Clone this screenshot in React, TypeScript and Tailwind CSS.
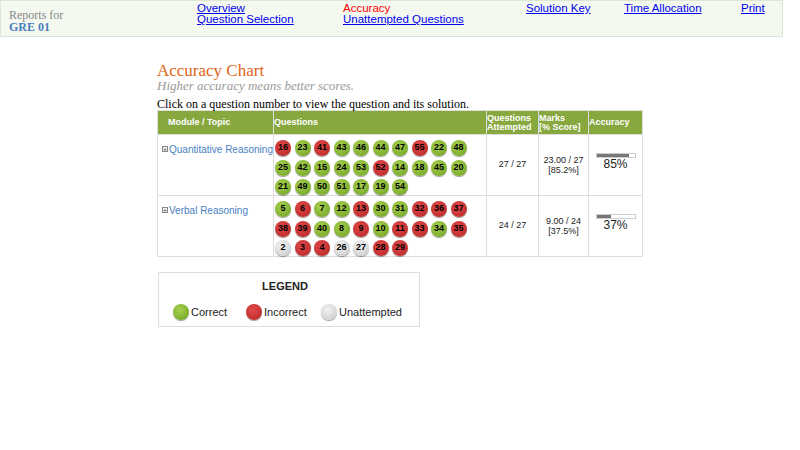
const Q: [string, string][] = [
["16","r"],["23","g"],["41","r"],["43","g"],["46","g"],["44","g"],["47","g"],["55","r"],["22","g"],["48","g"],
["25","g"],["42","g"],["15","g"],["24","g"],["53","g"],["52","r"],["14","g"],["18","g"],["45","g"],["20","g"],
["21","g"],["49","g"],["50","g"],["51","g"],["17","g"],["19","g"],["54","g"]];
const V: [string, string][] = [
["5","g"],["6","r"],["7","g"],["12","g"],["13","r"],["30","g"],["31","g"],["32","r"],["36","r"],["37","r"],
["38","r"],["39","r"],["40","g"],["8","g"],["9","r"],["10","g"],["11","r"],["33","r"],["34","g"],["35","r"],
["2","u"],["3","r"],["4","r"],["26","u"],["27","u"],["28","r"],["29","r"]];

function Ball({ n, c, size = "w-[16px] h-[16px]" }: { n?: string; c: string; size?: string }) {
  const bg = c === "g" ? "bg-[radial-gradient(circle_at_40%_35%,#a6d04f,#7fae2e_70%,#5f8a1c)]" : c === "r" ? "bg-[radial-gradient(circle_at_40%_35%,#e04848,#c22f2f_70%,#962020)]" : "bg-[radial-gradient(circle_at_40%_35%,#f2f2f2,#d4d4d4_70%,#a8a8a8)]";
  return <div className={`${size} ${bg} rounded-full flex items-center justify-center text-[9px] font-bold text-black shadow-[0_1px_1px_rgba(0,0,0,0.4)]`}>{n}</div>;
}

function Balls({ list }: { list: [string, string][] }) {
  return <div className="grid grid-cols-[repeat(10,19.5px)] gap-y-[3.5px] pl-[1px] py-[5px]">{list.map(([n, c], i) => <Ball key={i} n={n} c={c} />)}</div>;
}

function Bar({ p }: { p: number }) {
  return <div className="flex flex-col items-center pt-[2px]">
    <div className="w-[40px] h-[5px] border border-[#ccc] bg-white"><div className="h-full bg-[#777]" style={{ width: `${p}%` }} /></div>
    <div className="text-[12px] leading-[13px] text-[#222]">{p}%</div>
  </div>;
}

export default function App() {
  const f = { fontFamily: '"Liberation Sans", Arial, sans-serif' };
  const s = { fontFamily: '"Liberation Serif", "Times New Roman", serif' };
  return (
    <div className="w-[800px] h-[450px] bg-white relative" style={f}>
      <div className="w-[783px] h-[37px] bg-[#f4f9f0] border border-[#dde5d5] flex text-[11.5px] leading-[11px]">
        <div className="w-[196px] pl-[8px] pt-[8px]" style={s}>
          <div className="text-[#888] text-[12px] leading-[12px]">Reports for</div>
          <div className="text-[#4a7fbf] font-bold text-[12px] leading-[12px]">GRE 01</div>
        </div>
        <div className="w-[146px] pt-[2px] flex flex-col text-[#0000ee] underline"><a>Overview</a><a>Question Selection</a></div>
        <div className="w-[183px] pt-[2px] flex flex-col"><span className="text-[#f00]">Accuracy</span><a className="text-[#0000ee] underline">Unattempted Questions</a></div>
        <div className="w-[98px] pt-[2px] text-[#0000ee] underline">Solution Key</div>
        <div className="w-[117px] pt-[2px] text-[#0000ee] underline">Time Allocation</div>
        <div className="pt-[2px] text-[#0000ee] underline">Print</div>
      </div>
      <div className="ml-[157px] mt-[26px]" style={s}>
        <div className="text-[#e0661a] text-[17px] leading-[16px]">Accuracy Chart</div>
        <div className="text-[#999] italic text-[13px] leading-[13px]">Higher accuracy means better scores.</div>
        <div className="text-[12px] leading-[12px] mt-[6px] text-black">Click on a question number to view the question and its solution.</div>
      </div>
      <div className="ml-[157px] mt-[0px] w-[486px] border border-[#ddd] text-[9px]" style={f}>
        <div className="flex bg-[#87a83f] text-white font-bold h-[23px] items-center">
          <div className="w-[116px] pl-[10px] border-r border-[#ddd] h-full flex items-center">Module / Topic</div>
          <div className="w-[213px] border-r border-[#ddd] h-full flex items-center">Questions</div>
          <div className="w-[52px] border-r border-[#ddd] h-full flex items-center leading-[9px]">Questions<br />Attempted</div>
          <div className="w-[50px] border-r border-[#ddd] h-full flex items-center leading-[9px]">Marks<br />[% Score]</div>
          <div className="flex-1">Accuracy</div>
        </div>
        {[["Quantitative Reasoning", Q, "27 / 27", "23.00 / 27", "[85.2%]", 85], ["Verbal Reasoning", V, "24 / 27", "9.00 / 24", "[37.5%]", 37]].map(([name, list, att, m, pc, p]: any, i) => (
          <div key={i} className="flex border-t border-[#ddd] h-[61px]">
            <div className="w-[116px] border-r border-[#ddd] pl-[4px] pt-[9px] flex items-start gap-[1px] text-[#4a7fbf] text-[10px] leading-[11px] whitespace-nowrap">
              <span className="mt-[2px] w-[6px] h-[6px] border border-[#888] text-[6px] leading-[4px] text-center text-[#444] bg-[#eee]">+</span>{name}
            </div>
            <div className="w-[213px] border-r border-[#ddd]"><Balls list={list} /></div>
            <div className="w-[52px] border-r border-[#ddd] flex items-center justify-center text-[9px] text-[#222]">{att}</div>
            <div className="w-[50px] border-r border-[#ddd] flex flex-col items-center justify-center text-[9px] leading-[10px] text-[#222]"><div>{m}</div><div>{pc}</div></div>
            <div className="flex-1 flex items-center justify-center pb-[8px]"><Bar p={p} /></div>
          </div>
        ))}
      </div>
      <div className="ml-[158px] mt-[15px] w-[262px] h-[55px] border border-[#ddd] text-[11px] text-[#222]">
        <div className="text-center font-bold mt-[5px] mr-[8px]">LEGEND</div>
        <div className="flex items-center mt-[9px] pl-[14px]">
          <Ball c="g" /><span className="ml-[2px] w-[55px]">Correct</span>
          <Ball c="r" /><span className="ml-[2px] w-[57px]">Incorrect</span>
          <Ball c="u" /><span className="ml-[2px]">Unattempted</span>
        </div>
      </div>
    </div>
  );
}
